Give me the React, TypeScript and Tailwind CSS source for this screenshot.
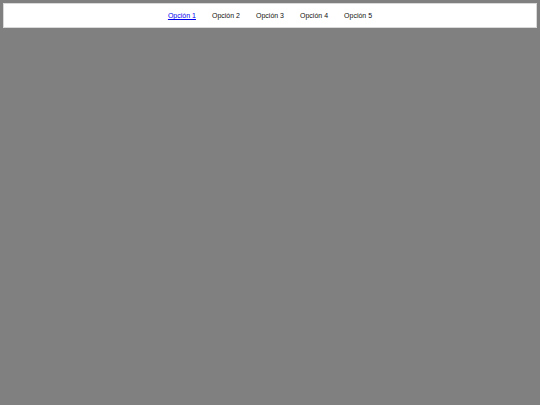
export default function App() {
  const options = ["Opción 1", "Opción 2", "Opción 3", "Opción 4", "Opción 5"];

  return (
    <div className="min-h-screen bg-[#808080] p-[3px] font-['Liberation_Sans',Arial,sans-serif]">
      <nav className="h-[25px] pt-[2px] bg-white border border-[#d9d9d9] flex items-center justify-center gap-[16px] text-[7px] text-[#111]">
        {options.map((opt, i) => (
          <a
            key={opt}
            href="#"
            className={i === 0 ? "text-[#0000ee] underline" : "text-[#111]"}
          >
            {opt}
          </a>
        ))}
      </nav>
    </div>
  );
}
